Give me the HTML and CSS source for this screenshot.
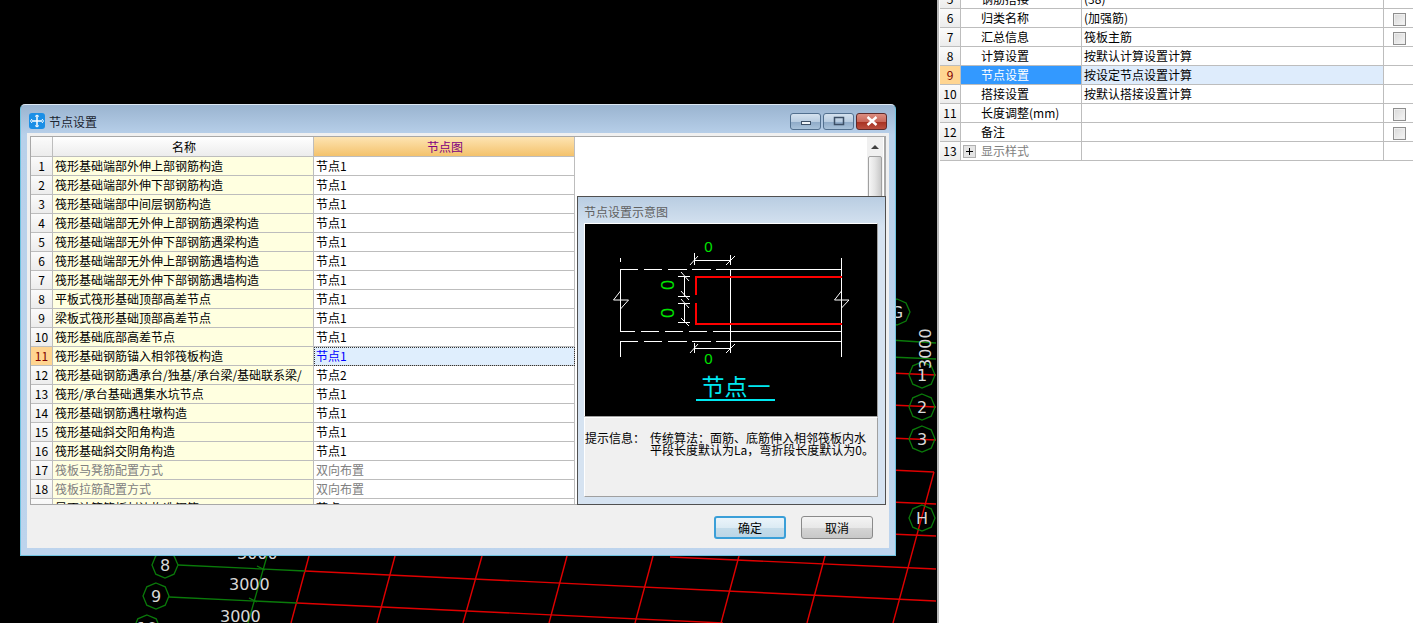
FILE: index.html
```html
<!DOCTYPE html>
<html lang="zh-CN">
<head>
    <meta charset="UTF-8">
    <title>节点设置</title>
    <link rel="stylesheet" href="styles.css">
</head>
<body>
    <div class="canvas">
        <svg class="cad" width="937" height="623" viewBox="0 0 937 623">
            <g class="axis-red">
                <path d="M305 571 L936 601"/>
                <path d="M297 603 L723 623"/>
                <path d="M670 557 L936 569"/>
                <path d="M309 556 L291 623"/>
                <path d="M395 556 L377 623"/>
                <path d="M482 556 L463 623"/>
                <path d="M567 556 L549 623"/>
                <path d="M653 556 L635 623"/>
                <path d="M739 556 L721 623"/>
                <path d="M825 556 L807 623"/>
                <path d="M934 472 L893 623"/>
                <path d="M890 373 L936 375"/>
                <path d="M890 405 L936 407"/>
                <path d="M890 438 L936 440"/>
                <path d="M890 470 L934 472"/>
                <path d="M890 502 L936 504"/>
                <path d="M890 534 L936 536"/>
            </g>
            <g class="axis-green">
                <path d="M178 565 L305 571"/>
                <path d="M169 597 L297 603"/>
                <path d="M267 556 L248 623"/>
                <path d="M257 566 L265 570 M249 598 L257 602"/>
                <path d="M890 340 L936 343"/>
                <path d="M890 357 L936 359"/>
                <path d="M165 552 L174 555.800 L178 565 L174 574.200 L165 578 L155.800 574.200 L152 565 L155.800 555.800 Z"/>
                <path d="M156 583 L165.200 586.800 L169 596 L165.200 605.200 L156 609 L146.800 605.200 L143 596 L146.800 586.800 Z"/>
                <path d="M147 615 L156.200 618.800 L160 628 L134 628 L137.800 618.800 Z"/>
                <path d="M922 362 L931.200 365.800 L935 375 L931.200 384.200 L922 388 L912.800 384.200 L909 375 L912.800 365.800 Z"/>
                <path d="M922 394 L931.200 397.800 L935 407 L931.200 416.200 L922 420 L912.800 416.200 L909 407 L912.800 397.800 Z"/>
                <path d="M922 426 L931.200 429.800 L935 439 L931.200 448.200 L922 452 L912.800 448.200 L909 439 L912.800 429.800 Z"/>
                <path d="M922 505 L931.200 508.800 L935 518 L931.200 527.200 L922 531 L912.800 527.200 L909 518 L912.800 508.800 Z"/>
                <path d="M897 299 L906 303 L910 312 L906 321 L897 325 L888 321 L884 312 L888 303 Z"/>
            </g>
            <g class="cad-label">
                <text x="237" y="559">3000</text>
                <text x="229" y="590">3000</text>
                <text x="220" y="622">3000</text>
                <text x="165" y="571" text-anchor="middle">8</text>
                <text x="156" y="602" text-anchor="middle">9</text>
                <text x="147" y="634" text-anchor="middle">10</text>
                <text x="922" y="381" text-anchor="middle">1</text>
                <text x="922" y="413" text-anchor="middle">2</text>
                <text x="922" y="445" text-anchor="middle">3</text>
                <text x="922" y="524" text-anchor="middle">H</text>
                <text x="897" y="318" text-anchor="middle">G</text>
                <text transform="translate(931 369) rotate(-90)">3000</text>
            </g>
        </svg>

        <div class="window">
            <div class="titlebar">
                <svg class="app-icon" width="16" height="16" viewBox="0 0 16 16">
                    <rect width="16" height="16" rx="3" fill="#1b8fe6"/>
                    <path d="M8 2.500 V13.500 M3 8 H13" stroke="#fff" stroke-width="1.500" fill="none"/>
                    <path d="M3 6 L1.500 8 L3 10 M13 6 L14.500 8 L13 10 M6 3.500 L8 2 L10 3.500 M6 12.500 L8 14 L10 12.500" stroke="#fff" fill="none"/>
                </svg>
                <span class="title-text">节点设置</span>
                <div class="title-buttons">
                    <div class="title-btn">
                        <svg width="12" height="10" viewBox="0 0 12 10"><rect x="1.500" y="5.500" width="9" height="3" fill="#eef3f8" stroke="#3c4f66"/></svg>
                    </div>
                    <div class="title-btn">
                        <svg width="12" height="10" viewBox="0 0 12 10"><rect x="1.500" y="1.500" width="9" height="7" fill="none" stroke="#3c4f66" stroke-width="1.500"/></svg>
                    </div>
                    <div class="title-btn close">
                        <svg width="12" height="10" viewBox="0 0 12 10"><path d="M1.500 1 L10.500 9 M10.500 1 L1.500 9" stroke="#fff" stroke-width="2.400"/></svg>
                    </div>
                </div>
            </div>
            <div class="client">
                <div class="grid-box">
                    <table class="grid node-grid">
                        <thead>
                            <tr><th class="num"></th><th>名称</th><th class="active">节点图</th></tr>
                        </thead>
                        <tbody>
                            <tr><td class="num">1</td><td class="name">筏形基础端部外伸上部钢筋构造</td><td>节点1</td></tr>
                            <tr><td class="num">2</td><td class="name">筏形基础端部外伸下部钢筋构造</td><td>节点1</td></tr>
                            <tr><td class="num">3</td><td class="name">筏形基础端部中间层钢筋构造</td><td>节点1</td></tr>
                            <tr><td class="num">4</td><td class="name">筏形基础端部无外伸上部钢筋遇梁构造</td><td>节点1</td></tr>
                            <tr><td class="num">5</td><td class="name">筏形基础端部无外伸下部钢筋遇梁构造</td><td>节点1</td></tr>
                            <tr><td class="num">6</td><td class="name">筏形基础端部无外伸上部钢筋遇墙构造</td><td>节点1</td></tr>
                            <tr><td class="num">7</td><td class="name">筏形基础端部无外伸下部钢筋遇墙构造</td><td>节点1</td></tr>
                            <tr><td class="num">8</td><td class="name">平板式筏形基础顶部高差节点</td><td>节点1</td></tr>
                            <tr><td class="num">9</td><td class="name">梁板式筏形基础顶部高差节点</td><td>节点1</td></tr>
                            <tr><td class="num">10</td><td class="name">筏形基础底部高差节点</td><td>节点1</td></tr>
                            <tr><td class="num current">11</td><td class="name">筏形基础钢筋锚入相邻筏板构造</td><td class="picked">节点1</td></tr>
                            <tr><td class="num">12</td><td class="name">筏形基础钢筋遇承台/独基/承台梁/基础联系梁/</td><td>节点2</td></tr>
                            <tr><td class="num">13</td><td class="name">筏形/承台基础遇集水坑节点</td><td>节点1</td></tr>
                            <tr><td class="num">14</td><td class="name">筏形基础钢筋遇柱墩构造</td><td>节点1</td></tr>
                            <tr><td class="num">15</td><td class="name">筏形基础斜交阳角构造</td><td>节点1</td></tr>
                            <tr><td class="num">16</td><td class="name">筏形基础斜交阴角构造</td><td>节点1</td></tr>
                            <tr class="muted"><td class="num">17</td><td class="name">筏板马凳筋配置方式</td><td>双向布置</td></tr>
                            <tr class="muted"><td class="num">18</td><td class="name">筏板拉筋配置方式</td><td>双向布置</td></tr>
                            <tr><td class="num">19</td><td class="name">是否计算筏板封边构造钢筋</td><td>节点</td></tr>
                        </tbody>
                    </table>
                    <div class="grid-rest"></div>
                    <div class="scrollbar">
                        <div class="scroll-up"><span class="arrow"></span></div>
                        <div class="scroll-thumb"></div>
                    </div>
                </div>
                <div class="footer">
                    <button type="button" class="btn default">确定</button>
                    <button type="button" class="btn">取消</button>
                </div>
            </div>

            <div class="preview">
                <div class="preview-title">节点设置示意图</div>
                <div class="preview-image">
                    <svg width="291" height="191" viewBox="586 225 291 191">
                        <g class="dwg-white">
                            <path d="M620.500 258 V262 M620.500 269.500 V291 M620.500 309 V331.500 M620.500 341.500 V357"/>
                            <path d="M620 269.500 H638 M644 269.500 H662 M668 269.500 H687 M692 269.500 H711 M716 269.500 H842"/>
                            <path d="M620 331.500 H635 M641 331.500 H659 M665 331.500 H683 M689 331.500 H707 M713 331.500 H842"/>
                            <path d="M620 341.500 H638 M644 341.500 H662 M668 341.500 H687 M692 341.500 H711 M716 341.500 H842"/>
                            <path d="M730.500 269 V353 M841.500 258 V291 M841.500 308 V357"/>
                            <path d="M613.500 300 L620.500 291 V309 L628.500 300 Z"/>
                            <path d="M834.500 300 L841.500 291 V308 L849 300 Z"/>
                            <path d="M694.500 253 V265 M730.500 255 V265 M694 260.500 H730 M690 265 L698 256 M726 265 L735 256"/>
                            <path d="M694.500 343 V353 M730.500 343 V353 M694 348.500 H730 M690 353 L698 344 M726 353 L735 344"/>
                            <path d="M684.500 277 V296 M678 276.500 H690 M678 296.500 H690 M681 272 L689 281 M681 291 L689 300"/>
                            <path d="M684.500 303 V322 M678 303.500 H690 M678 322.500 H690 M681 299 L689 308 M681 318 L689 326"/>
                        </g>
                        <path class="dwg-red" d="M696 295 V277 H842 M696 303 V324 H842"/>
                        <g class="dwg-dim">
                            <text x="708.500" y="252" text-anchor="middle">0</text>
                            <text x="708.500" y="364" text-anchor="middle">0</text>
                            <text class="dwg-side" transform="translate(661 285) rotate(90)" text-anchor="middle">0</text>
                            <text class="dwg-side" transform="translate(661 313) rotate(90)" text-anchor="middle">0</text>
                        </g>
                        <text class="dwg-caption" x="736" y="395" text-anchor="middle">节点一</text>
                        <path class="dwg-under" d="M696 400 H775"/>
                    </svg>
                </div>
                <div class="preview-info">
                    <span class="info-label">提示信息：</span>
                    <span class="info-text">传统算法：面筋、底筋伸入相邻筏板内水平段长度默认为La，弯折段长度默认为0。</span>
                </div>
            </div>
        </div>
    </div>

    <div class="props">
        <table class="grid prop-grid">
            <tbody>
                <tr><td class="num">5</td><td class="prop">钢筋搭接</td><td>(38)</td><td></td></tr>
                <tr><td class="num">6</td><td class="prop">归类名称</td><td>(加强筋)</td><td class="chk"><span class="checkbox"></span></td></tr>
                <tr><td class="num">7</td><td class="prop">汇总信息</td><td>筏板主筋</td><td class="chk"><span class="checkbox"></span></td></tr>
                <tr><td class="num">8</td><td class="prop">计算设置</td><td>按默认计算设置计算</td><td></td></tr>
                <tr class="selected"><td class="num current">9</td><td class="prop">节点设置</td><td>按设定节点设置计算</td><td class="plain"></td></tr>
                <tr><td class="num">10</td><td class="prop">搭接设置</td><td>按默认搭接设置计算</td><td></td></tr>
                <tr><td class="num">11</td><td class="prop">长度调整(mm)</td><td></td><td class="chk"><span class="checkbox"></span></td></tr>
                <tr><td class="num">12</td><td class="prop">备注</td><td></td><td class="chk"><span class="checkbox"></span></td></tr>
                <tr class="muted"><td class="num">13</td><td class="prop group"><span class="expander">
                    <svg width="13" height="13" viewBox="0 0 13 13"><rect x="0.500" y="0.500" width="12" height="12" fill="#e4e4e4" stroke="#b0b0b0"/><path d="M3 6.500 H10 M6.500 3 V10" stroke="#000"/></svg>
                </span>显示样式</td><td></td><td></td></tr>
            </tbody>
        </table>
    </div>
</body>
</html>
```

FILE: styles.css
```css
* {
    box-sizing: border-box;
}
html, body {
    height: 100%;
}
body {
    margin: 0;
    display: flex;
    overflow: hidden;
    background-color: #000;
    font-family: "Noto Sans CJK SC", "Liberation Sans", sans-serif;
    font-size: 12px;
    color: #000;
}

/* cad drawing behind the dialog */
.canvas {
    position: relative;
    flex: none;
    width: 937px;
    height: 623px;
    overflow: hidden;
}
.cad {
    position: absolute;
    left: 0;
    top: 0;
}
.axis-red path {
    stroke: #e00000;
    stroke-width: 1.4;
    fill: none;
}
.axis-green path {
    stroke: #0a7a0a;
    stroke-width: 1.3;
    fill: none;
}
.cad-label text {
    font-family: "DejaVu Sans", sans-serif;
    font-size: 16px;
    fill: #d8d8d8;
}

/* dialog window */
.window {
    position: absolute;
    left: 20px;
    top: 104px;
    width: 876px;
    height: 452px;
    display: flex;
    flex-direction: column;
    padding: 0 6px 7px;
    background: linear-gradient(to bottom, #9ab4d0 0, #b8d0ea 30px, #bdd4ed 100%);
    border: 1px solid #6fc3e0;
    border-top-color: #dce8f3;
    border-radius: 5px 5px 0 0;
}
.titlebar {
    flex: none;
    height: 28px;
    display: flex;
    align-items: center;
    padding: 4px 0 0 2px;
}
.app-icon {
    margin-right: 4px;
}
.title-text {
    color: #1a2430;
}
.title-buttons {
    margin-left: auto;
    display: flex;
    gap: 2px;
    margin-right: 2px;
}
.title-btn {
    width: 31px;
    height: 17px;
    display: flex;
    align-items: center;
    justify-content: center;
    border: 1px solid #52708f;
    border-radius: 3px;
    background: linear-gradient(to bottom, #d5e2ef 0, #b9cde1 50%, #8fabc8 55%, #a9c2da 100%);
}
.title-btn.close {
    border-color: #5e2a2a;
    background: linear-gradient(to bottom, #dc8d80 0, #c9685a 50%, #a83222 55%, #bb5040 100%);
}
.client {
    flex: 1;
    display: flex;
    flex-direction: column;
    min-height: 0;
    padding: 3px 3px 0;
    background-color: #f0f0f0;
}
.grid-box {
    flex: none;
    height: 369px;
    display: flex;
    overflow: hidden;
    background-color: #fff;
    border: 1px solid #a8a8a8;
    border-right-width: 2px;
}
.grid-rest {
    flex: 1;
}
.footer {
    display: flex;
    justify-content: flex-end;
    gap: 15px;
    padding: 11px 13px 0 0;
}
.btn {
    width: 72px;
    height: 23px;
    padding: 0;
    font-family: inherit;
    font-size: 12px;
    color: #000;
    border: 1px solid #8a8a8a;
    border-radius: 3px;
    background: linear-gradient(to bottom, #f4f4f4 0, #e8e8e8 50%, #d4d4d4 55%, #c8c8c8 100%);
}
.btn.default {
    border: 2px solid #3a9fd8;
    background: linear-gradient(to bottom, #eaf4fa 0, #dcebf4 50%, #c4dcea 55%, #bcd6e6 100%);
}

/* shared grid look */
.grid {
    flex: none;
    border-collapse: separate;
    border-spacing: 0;
    table-layout: fixed;
}
.grid th,
.grid td {
    height: 19px;
    padding: 0 0 0 2px;
    font-weight: normal;
    line-height: 18px;
    white-space: nowrap;
    overflow: hidden;
    border-right: 1px solid #bdbdbd;
    border-bottom: 1px solid #bdbdbd;
}
.grid th {
    height: 20px;
    text-align: center;
    background: linear-gradient(to bottom, #fff 0, #ececec 100%);
}
.grid th.active {
    color: #800080;
    background: linear-gradient(to bottom, #fde4b2 0, #f4c26c 100%);
}
.grid .num {
    padding: 0;
    text-align: center;
    background: linear-gradient(to bottom, #fbfbfb 0, #ececec 100%);
}
.grid .num.current {
    color: #800000;
    background: #ffd591;
}
.muted td {
    color: #808080;
}
.muted .num {
    color: #000;
}

.node-grid {
    width: 544px;
}
.node-grid th:nth-child(1) {
    width: 22px;
}
.node-grid th:nth-child(2) {
    width: 261px;
}
.node-grid th:nth-child(3) {
    width: 261px;
}
.node-grid .name {
    background-color: #ffffe0;
}
.node-grid .picked {
    color: #0000ff;
    background-color: #dfeefd;
    outline: 1px dotted #333;
    outline-offset: -1px;
}

.scrollbar {
    flex: none;
    width: 16px;
    margin-right: 1px;
    background-color: #f0f0f0;
}
.scroll-up {
    height: 19px;
    display: flex;
    align-items: center;
    justify-content: center;
}
.arrow {
    width: 0;
    height: 0;
    border-left: 4px solid transparent;
    border-right: 4px solid transparent;
    border-bottom: 4px solid #404040;
}
.scroll-thumb {
    height: 100%;
    margin: 0 1px;
    border: 1px solid #a0a0a0;
    border-radius: 2px;
    background: linear-gradient(to right, #f6f6f6 0, #e4e4e4 50%, #c8c8c8 100%);
}

/* preview panel, floats over the grid */
.preview {
    position: absolute;
    left: 556px;
    top: 91px;
    width: 309px;
    height: 309px;
    padding: 0 6px;
    border: 1px solid #505050;
    background: linear-gradient(to bottom, #b9cde2 0, #d6e3f1 30px, #d6e3f1 100%);
}
.preview-title {
    height: 26px;
    line-height: 30px;
    color: #606060;
}
.preview-image {
    width: 294px;
    height: 194px;
    padding: 1px 0 0 1px;
    background-color: #000;
    border: 1px solid;
    border-color: #fff #a0a0a0 #a0a0a0 #fff;
}
.preview-image svg {
    display: block;
}
.dwg-white path {
    stroke: #fff;
    fill: none;
}
.dwg-red {
    stroke: #ff0000;
    stroke-width: 2;
    fill: none;
}
.dwg-dim text {
    font-family: "Liberation Sans", sans-serif;
    font-size: 15px;
    fill: #00e000;
}
.dwg-dim .dwg-side {
    font-size: 18px;
}
.dwg-caption {
    font-size: 23px;
    fill: #00e8f0;
}
.dwg-under {
    stroke: #00e8f0;
    stroke-width: 2;
    fill: none;
}
.preview-info {
    display: flex;
    width: 294px;
    height: 80px;
    padding: 14px 0 0;
    line-height: 12px;
    background-color: #f0f0f0;
    border: 1px solid;
    border-color: #fff #a0a0a0 #a0a0a0 #fff;
}
.info-label {
    flex: none;
    width: 65px;
}
.info-text {
    width: 227px;
    word-break: break-all;
}

/* property list on the right */
.props {
    flex: 1;
    min-width: 0;
    height: 623px;
    overflow: hidden;
    padding-left: 1px;
    background-color: #fff;
    border-left: 2px solid #b8b8b8;
}
.prop-grid {
    width: 473px;
    margin-top: -10px;
}
.prop-grid tr:first-child td:nth-child(1) {
    width: 21px;
}
.prop-grid tr:first-child td:nth-child(2) {
    width: 121px;
}
.prop-grid tr:first-child td:nth-child(3) {
    width: 302px;
}
.prop-grid tr:first-child td:nth-child(4) {
    width: 29px;
}
.prop-grid td:last-child {
    border-right: none;
}
.prop-grid .prop {
    padding-left: 20px;
}
.prop-grid .group {
    padding-left: 2px;
}
.expander {
    display: inline-block;
    width: 18px;
    vertical-align: top;
    line-height: 0;
    padding-top: 3px;
}
.selected .prop {
    color: #fff;
    background-color: #3399ff;
}
.selected td:nth-child(3) {
    background-color: #deecfc;
}
.chk {
    text-align: center;
    line-height: 0;
}
.checkbox {
    display: inline-block;
    width: 13px;
    height: 13px;
    vertical-align: middle;
    border: 1px solid #8e8e8e;
    background: linear-gradient(135deg, #d8d8d8 0, #f6f6f6 100%);
    box-shadow: inset 0 0 0 1px #eee;
}
```
